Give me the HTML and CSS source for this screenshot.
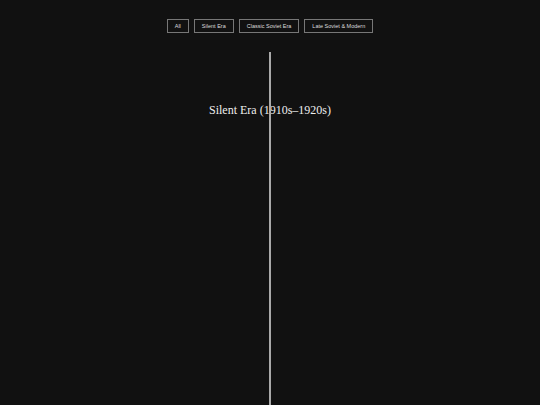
FILE: index.html
```html
<!DOCTYPE html>
<html lang="en">
<head>
  <meta charset="UTF-8" />
  <meta name="viewport" content="width=device-width, initial-scale=1.0"/>
  <title>Soviet Cinema Timeline</title>
  <link rel="stylesheet" href="styles.css">
</head>
<body>

  <!-- era filters -->
  <nav class="filters">
    <button class="filter-btn">All</button>
    <button class="filter-btn">Silent Era</button>
    <button class="filter-btn">Classic Soviet Era</button>
    <button class="filter-btn">Late Soviet &amp; Modern</button>
  </nav>

  <!-- timeline -->
  <main class="timeline">
    <section class="era">
      <h2 class="era-title">Silent Era (1910s–1920s)</h2>
    </section>
  </main>

</body>
</html>
```

FILE: styles.css
```css
/* page base */
html, body {
  margin: 0;
  padding: 0;
  height: 100%;
  background: #111;
  color: #eee;
  font-family: "Liberation Serif", "Times New Roman", serif;
}

body {
  display: flex;
  flex-direction: column;
}

/* filter buttons */
.filters {
  display: flex;
  justify-content: center;
  gap: 5px;
  padding-top: 19px;
}

.filter-btn {
  background: transparent;
  color: #ddd;
  border: 1px solid #777;
  font-family: "Liberation Sans", Arial, sans-serif;
  font-size: 5.5px;
  height: 14px;
  padding: 0 7px;
  cursor: pointer;
}

/* timeline with a center line */
.timeline {
  position: relative;
  flex: 1;
  margin-top: 19px;
}

.timeline::after {
  content: "";
  position: absolute;
  top: 0;
  bottom: 0;
  left: 50%;
  width: 2px;
  margin-left: -1px;
  background: #aaa;
}

.era-title {
  margin: 0;
  padding-top: 51px;
  text-align: center;
  font-size: 12px;
  font-weight: normal;
}
```
